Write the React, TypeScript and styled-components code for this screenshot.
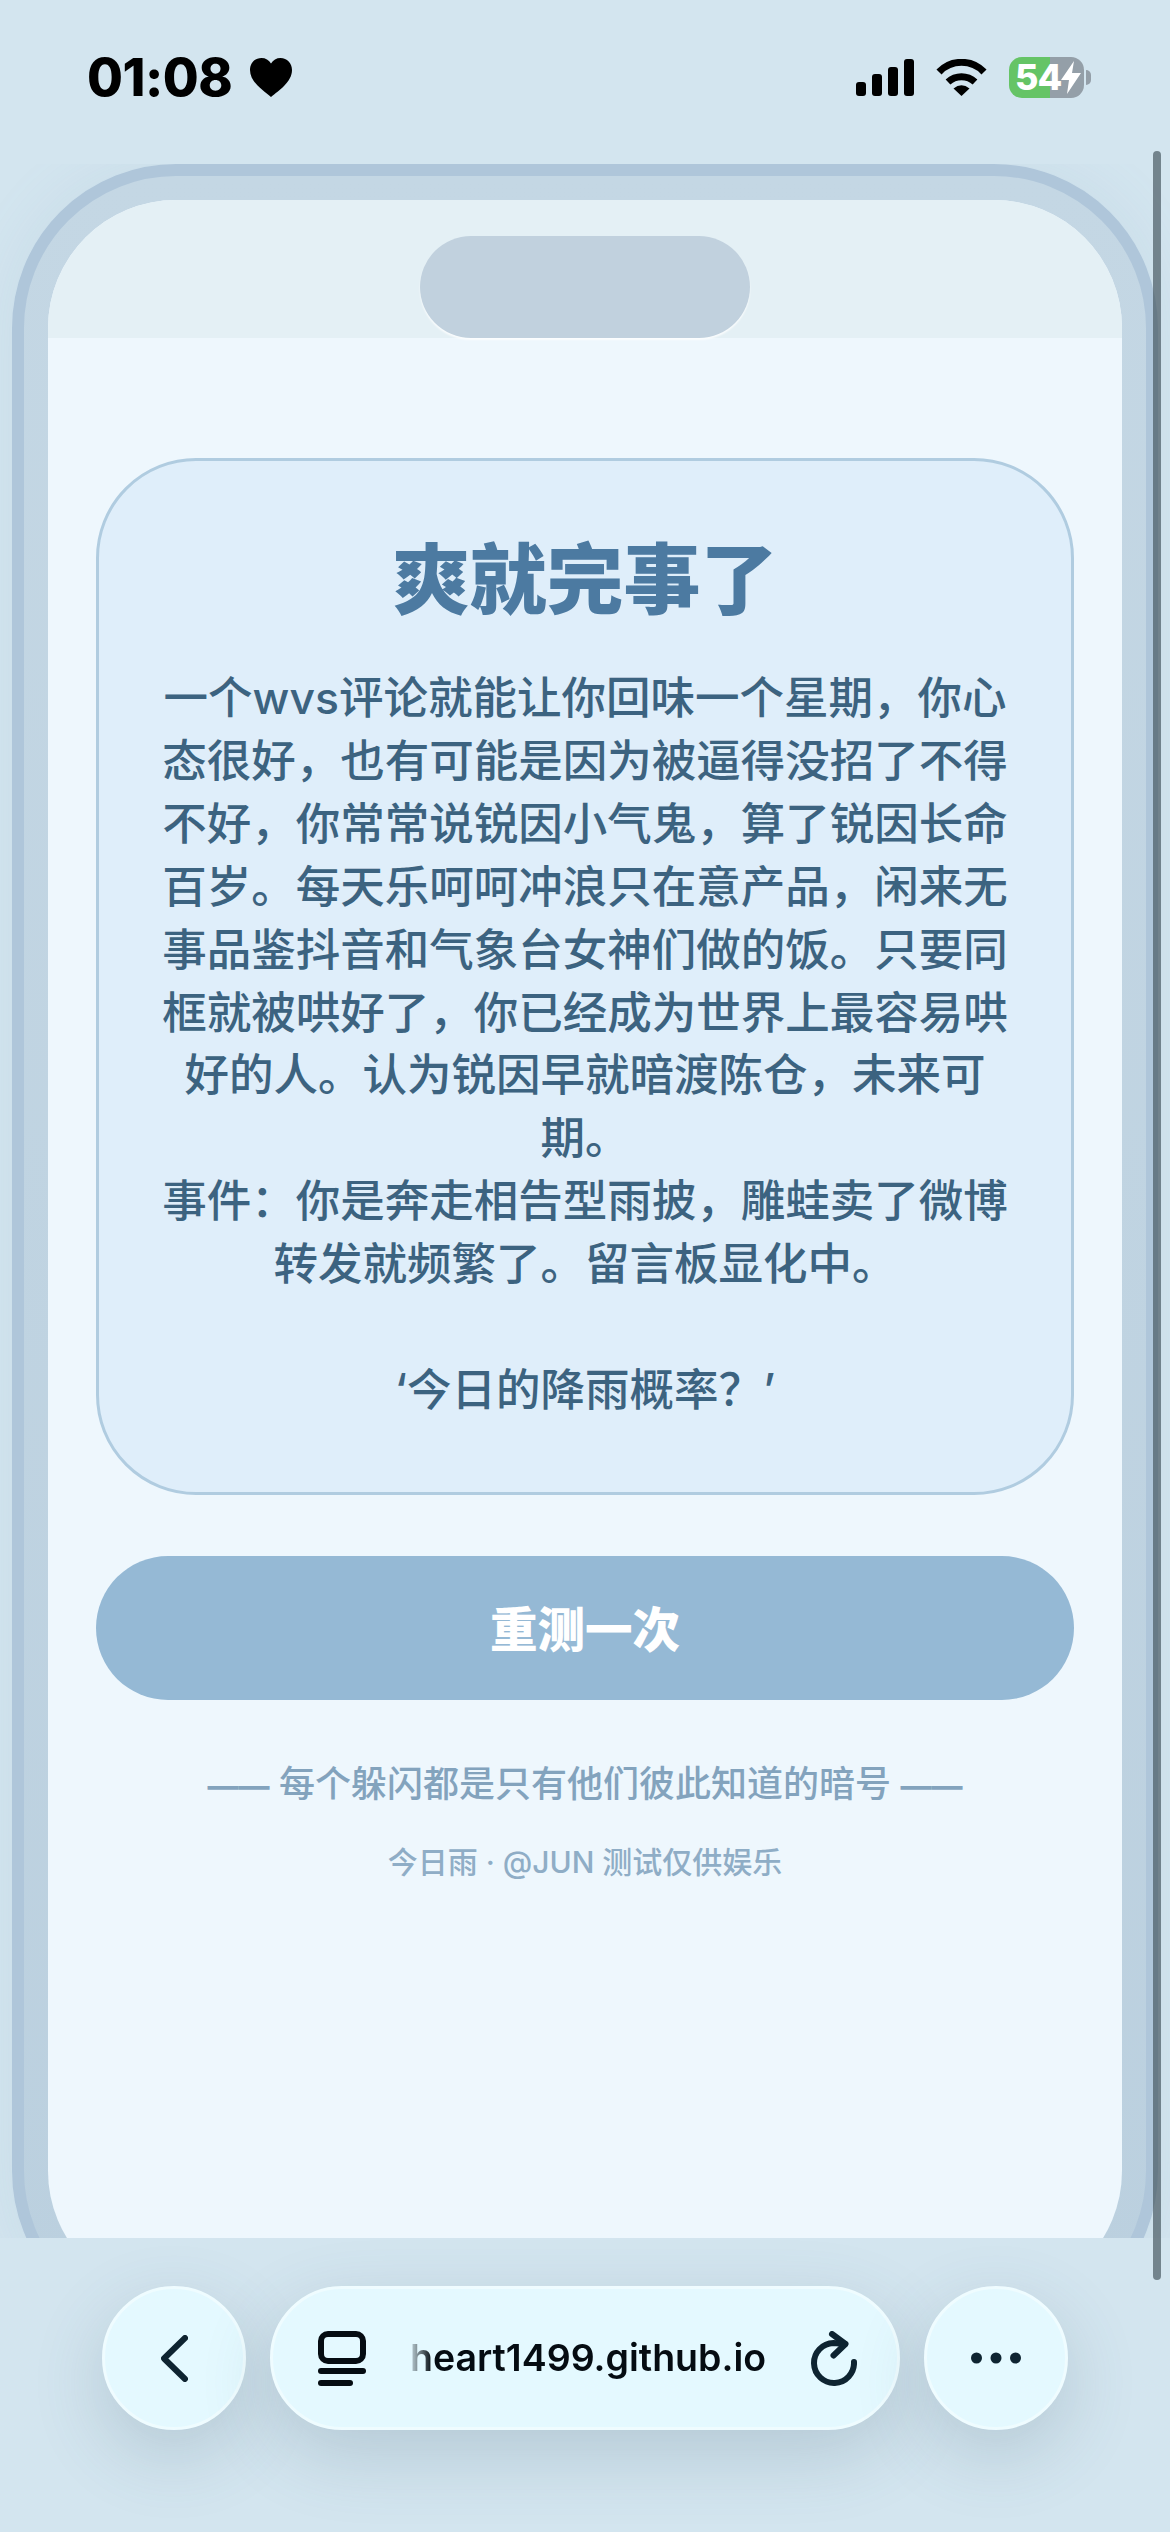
import React from 'react';
import styled, { createGlobalStyle } from 'styled-components';

const fontStack = `Inter, 'Noto Sans CJK SC', 'Noto Sans', sans-serif`;

const GlobalStyle = createGlobalStyle`
  html, body {
    margin: 0;
    padding: 0;
    background: #d3e5ef;
    font-family: ${fontStack};
  }
  * {
    box-sizing: border-box;
  }
`;

const Page = styled.div`
  position: relative;
  width: 1170px;
  height: 2532px;
  overflow: hidden;
  display: flex;
  flex-direction: column;
  background: #d3e5ef;
`;

const StatusBar = styled.div`
  height: 164px;
  flex: none;
  display: flex;
  justify-content: space-between;
  align-items: flex-start;
  padding: 57px 79px 0 87px;
`;
const TimeGroup = styled.div`
  display: flex;
  align-items: center;
  gap: 18px;
  height: 41px;
`;
const Time = styled.span`
  font-size: 52px;
  font-weight: 800;
  line-height: 41px;
  letter-spacing: -0.5px;
  color: #000;
`;
const StatusIcons = styled.div`
  display: flex;
  align-items: center;
  gap: 22px;
  height: 41px;
`;
const Battery = styled.div`
  position: relative;
  width: 75px;
  height: 41px;
  border-radius: 13px;
  margin-right: 7px;
  display: flex;
  align-items: center;
  padding-left: 6px;
  background: linear-gradient(90deg, #65c466 54.6%, #949fa8 54.6%);
  &::after {
    content: '';
    position: absolute;
    right: -7px;
    top: 13px;
    width: 5px;
    height: 15px;
    border-radius: 0 8px 8px 0;
    background: #949fa8;
  }
`;
const BatteryLevel = styled.span`
  font-size: 36px;
  font-weight: 800;
  line-height: 41px;
  letter-spacing: -1px;
  color: #fff;
`;

const ScrollThumb = styled.div`
  position: absolute;
  top: 151px;
  right: 9px;
  width: 8px;
  height: 2129px;
  border-radius: 4px;
  background: rgba(70, 85, 95, 0.68);
  z-index: 3;
`;

const Viewport = styled.div`
  height: 2074px;
  flex: none;
  overflow: hidden;
  padding: 0 12px;
`;
const Frame = styled.div`
  height: 2171px;
  border: 12px solid #afc6da;
  border-radius: 164px;
  padding: 24px;
  background: linear-gradient(180deg, #c4d7e4 0%, #bbd0df 100%);
  box-shadow: 0 0 60px rgba(120, 160, 190, 0.12);
`;
const Screen = styled.div`
  height: 100%;
  border-radius: 128px;
  overflow: hidden;
  display: flex;
  flex-direction: column;
  background: #eef7fd;
`;
const NotchStrip = styled.div`
  height: 138px;
  flex: none;
  display: flex;
  justify-content: center;
  align-items: flex-end;
  background: #e4f0f5;
`;
const Notch = styled.div`
  width: 330px;
  height: 102px;
  border-radius: 51px;
  background: #c1d1de;
  box-shadow: 0 2px 2px rgba(255, 255, 255, 0.8);
`;
const Content = styled.div`
  flex: 1;
  display: flex;
  flex-direction: column;
  padding: 120px 48px 0;
  align-items: stretch;
`;
const ResultCard = styled.section`
  height: 1037px;
  border: 3px solid #b0cce0;
  border-radius: 100px;
  padding: 69px 54px 0;
  background: #dfeefa;
  text-align: center;
`;
const Title = styled.h1`
  margin: 0 0 37px;
  font-size: 77px;
  line-height: 100px;
  font-weight: 900;
  color: #4c7aa1;
`;
const Description = styled.p`
  margin: 0;
  font-size: 44.5px;
  line-height: 62.9px;
  font-weight: 500;
  color: #3c6380;
  white-space: pre-line;
`;
const RetryButton = styled.button`
  height: 144px;
  margin-top: 61px;
  padding: 0 0 4px;
  border: none;
  border-radius: 72px;
  background: #95b9d5;
  color: #fff;
  font-family: ${fontStack};
  font-size: 47.5px;
  font-weight: 800;
`;
const Tagline = styled.p`
  margin: 59px 0 0;
  font-size: 36px;
  line-height: 50px;
  font-weight: 500;
  text-align: center;
  color: #83a3bd;
`;
const TaglineRule = styled.span`
  font-size: 31px;
  font-weight: 700;
`;
const Footnote = styled.p`
  margin: 31px 0 0;
  font-size: 30px;
  line-height: 40px;
  font-weight: 500;
  text-align: center;
  color: #8fadc6;
`;

const BottomBar = styled.div`
  flex: 1;
  position: relative;
  z-index: 2;
  display: flex;
  justify-content: center;
  align-items: flex-start;
  gap: 24px;
  padding-top: 48px;
  background: #d3e5ef;
`;
const RoundButton = styled.div`
  width: 144px;
  height: 144px;
  border-radius: 50%;
  border: 3px solid #effcff;
  background: #e4f9ff;
  display: flex;
  align-items: center;
  justify-content: center;
  box-shadow: 0 24px 72px rgba(60, 90, 110, 0.2);
`;
const UrlPill = styled.div`
  width: 630px;
  height: 144px;
  border-radius: 72px;
  border: 3px solid #effcff;
  background: #e4f9ff;
  display: flex;
  align-items: center;
  padding: 0 39px 0 45px;
  box-shadow: 0 24px 72px rgba(60, 90, 110, 0.2);
`;
const UrlText = styled.span`
  margin: 0 45px 0 44px;
  width: 356px;
  flex: none;
  overflow: hidden;
  white-space: nowrap;
  font-size: 37.5px;
  line-height: 48px;
  font-weight: 600;
  color: #050c12;
  mask-image: linear-gradient(90deg, rgba(0, 0, 0, 0.15), #000 22px);
`;

const Heart = () => (
  <svg width="42" height="39" viewBox="0 0 42 39">
    <path
      d="M21 39C13 32.5 0 24 0 12 0 5 5 0 11.5 0 15.5 0 19 2 21 5.5 23 2 26.5 0 30.5 0 37 0 42 5 42 12 42 24 29 32.5 21 39Z"
      fill="#000"
    />
  </svg>
);

const SignalIcon = () => (
  <svg width="58" height="37" viewBox="0 0 58 37" fill="#000">
    <rect x="0" y="23" width="10" height="14" rx="3" />
    <rect x="16" y="15" width="10" height="22" rx="3" />
    <rect x="32" y="8" width="10" height="29" rx="3" />
    <rect x="48" y="0" width="10" height="37" rx="3" />
  </svg>
);

const WifiIcon = () => (
  <svg width="51" height="37" viewBox="0 0 51 37" fill="none" stroke="#000" strokeWidth="7">
    <path d="M3 13A31 31 0 0 1 48 13" />
    <path d="M12 23A20 20 0 0 1 39 23" />
    <path d="M25.5 37L17.5 29.5Q25.5 23 33.5 29.5Z" fill="#000" stroke="none" />
  </svg>
);

const BoltIcon = () => (
  <svg width="20" height="33" viewBox="0 0 20 33" fill="#fff">
    <path d="M13 0L0 19H8L6 33 20 12H11Z" />
  </svg>
);

const BackIcon = () => (
  <svg width="27" height="47" viewBox="0 0 27 47" fill="none" stroke="#0e2431" strokeWidth="6" strokeLinecap="round" strokeLinejoin="round">
    <path d="M24 3L3 23.5 24 44" />
  </svg>
);

const TabsIcon = () => (
  <svg width="48" height="55" viewBox="0 0 48 55" fill="none" stroke="#050c12" strokeWidth="6" strokeLinecap="round">
    <rect x="3" y="3" width="42" height="27" rx="7" />
    <path d="M3 40H45" />
    <path d="M3 52H32" />
  </svg>
);

const ReloadIcon = () => (
  <svg width="46" height="55" viewBox="0 0 46 55" fill="none" stroke="#0e2431" strokeWidth="6" strokeLinecap="round" strokeLinejoin="round">
    <path d="M21 3L34.5 13 22.5 24.5" />
    <path d="M34 13L22.5 12A20 20 0 1 0 43 31" />
  </svg>
);

const MoreIcon = () => (
  <svg width="50" height="12" viewBox="0 0 50 12" fill="#0e2431">
    <circle cx="5.5" cy="6" r="5.5" />
    <circle cx="25" cy="6" r="5.5" />
    <circle cx="44.5" cy="6" r="5.5" />
  </svg>
);

const resultText = `一个wvs评论就能让你回味一个星期，你心态很好，也有可能是因为被逼得没招了不得不好，你常常说锐因小气鬼，算了锐因长命百岁。每天乐呵呵冲浪只在意产品，闲来无事品鉴抖音和气象台女神们做的饭。只要同框就被哄好了，你已经成为世界上最容易哄好的人。认为锐因早就暗渡陈仓，未来可期。
事件：你是奔走相告型雨披，雕蛙卖了微博转发就频繁了。留言板显化中。

‘今日的降雨概率？’`;

const App = () => (
  <Page>
    <GlobalStyle />
    <StatusBar>
      <TimeGroup>
        <Time>01:08</Time>
        <Heart />
      </TimeGroup>
      <StatusIcons>
        <SignalIcon />
        <WifiIcon />
        <Battery>
          <BatteryLevel>54</BatteryLevel>
          <BoltIcon />
        </Battery>
      </StatusIcons>
    </StatusBar>
    <Viewport>
      <Frame>
        <Screen>
          <NotchStrip>
            <Notch />
          </NotchStrip>
          <Content>
            <ResultCard>
              <Title>爽就完事了</Title>
              <Description>{resultText}</Description>
            </ResultCard>
            <RetryButton>重测一次</RetryButton>
            <Tagline>
              <TaglineRule>——</TaglineRule> 每个躲闪都是只有他们彼此知道的暗号 <TaglineRule>——</TaglineRule>
            </Tagline>
            <Footnote>今日雨 · @JUN 测试仅供娱乐</Footnote>
          </Content>
        </Screen>
      </Frame>
    </Viewport>
    <BottomBar>
      <RoundButton>
        <BackIcon />
      </RoundButton>
      <UrlPill>
        <TabsIcon />
        <UrlText>heart1499.github.io</UrlText>
        <ReloadIcon />
      </UrlPill>
      <RoundButton>
        <MoreIcon />
      </RoundButton>
    </BottomBar>
    <ScrollThumb />
  </Page>
);

export default App;
